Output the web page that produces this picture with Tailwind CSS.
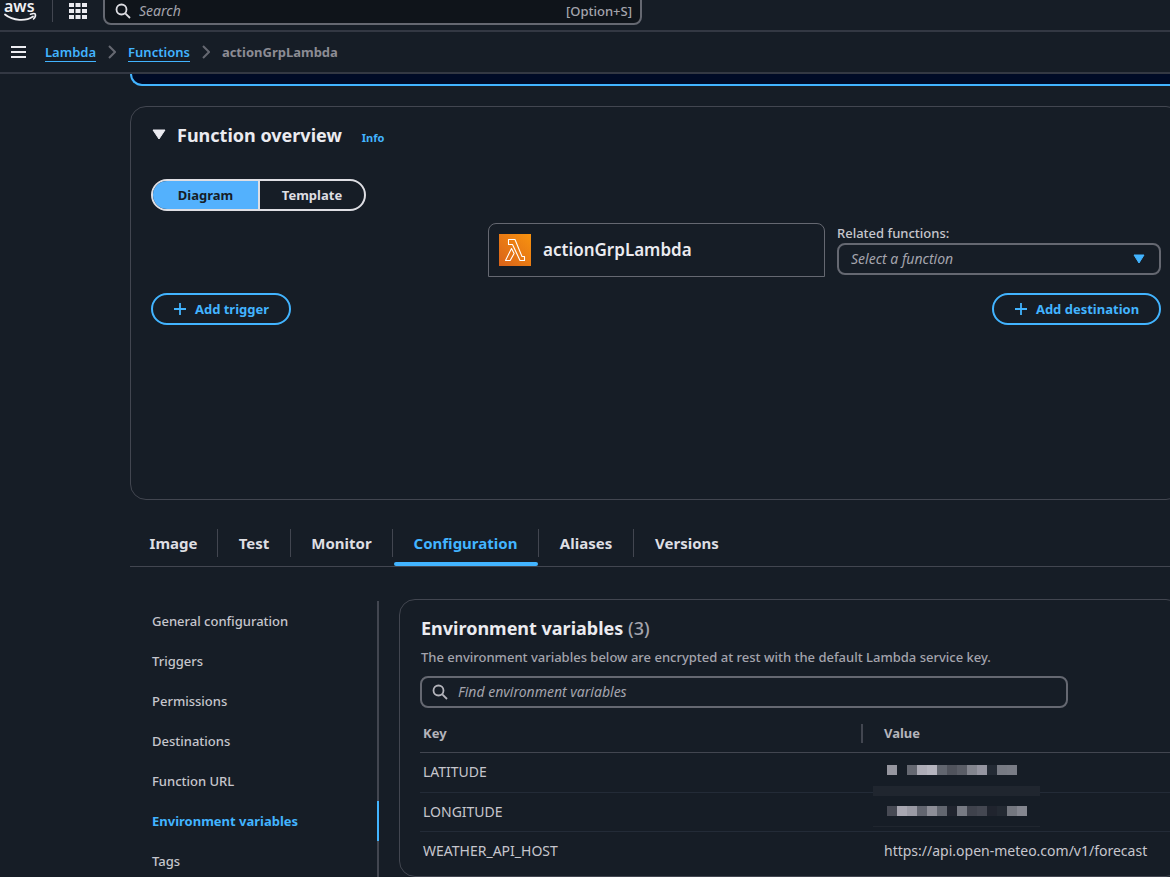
<!DOCTYPE html>
<html lang="en">
<head>
    <meta charset="UTF-8">
    <meta name="viewport" content="width=device-width, initial-scale=1.0">
    <title>actionGrpLambda | Functions | Lambda</title>
    <script src="https://cdn.jsdelivr.net/npm/@tailwindcss/browser@4"></script>
</head>
<body class="bg-[#161d26] text-[#c6c6cd] font-['Noto_Sans','Open_Sans',sans-serif] text-[13px] leading-5 min-h-screen overflow-x-hidden">
    <!-- Top navigation -->
    <header class="h-8 flex items-end border-b-2 border-[#333843] overflow-hidden">
        <div class="flex items-end h-full w-full">
            <a href="#" aria-label="AWS" class="ml-1 mb-2 shrink-0">
                <svg width="34" height="22" viewBox="0 0 34 22" fill="none">
                    <text x="0" y="12" font-size="16" font-weight="600" fill="#f0f0f3" font-family="Noto Sans, sans-serif">aws</text>
                    <path d="M1 14.5C9 21 22 21.500 29 16.500" stroke="#f0f0f3" stroke-width="1.800" stroke-linecap="round"/>
                    <path d="M26.500 14.200C29 13.400 31 13.600 31.300 14.200C31.600 15 31 17.500 29.500 19" stroke="#f0f0f3" stroke-width="1.600" stroke-linecap="round"/>
                </svg>
            </a>
            <div class="ml-3.5 mb-2 h-8 w-px bg-[#424650]"></div>
            <button aria-label="Services" class="ml-4 mb-2.5">
                <svg width="18" height="18" viewBox="0 0 18 18" fill="#ebebf0">
                    <path d="M0 1h5v4H0zM6.500 1h5v4h-5zM13 1h5v4h-5zM0 7h5v4H0zM6.500 7h5v4h-5zM13 7h5v4h-5zM0 13h5v4H0zM6.500 13h5v4h-5zM13 13h5v4h-5z"/>
                </svg>
            </button>
            <label class="ml-4 mb-[5px] w-[539px] h-9 flex items-center gap-2 shrink-0 rounded-lg border-2 border-[#656871] bg-[#0f141a] pl-2.5 pr-2 pt-2 text-sm">
                <svg width="16" height="16" viewBox="0 0 16 16" fill="none" stroke="#dedee3" stroke-width="1.800">
                    <circle cx="6.500" cy="6.500" r="5"/>
                    <path d="M10.300 10.300L15 15"/>
                </svg>
                <input type="text" placeholder="Search" aria-label="Search" class="grow min-w-0 bg-transparent outline-none placeholder:italic placeholder:text-[#a4a4ad]">
                <span class="text-[13px] text-[#a4a4ad] font-medium">[Option+S]</span>
            </label>
        </div>
    </header>

    <!-- Breadcrumbs -->
    <nav class="h-[42px] flex items-center border-b-2 border-[#333843] pl-[11px] text-[#8c8c94]" aria-label="Breadcrumbs">
        <button aria-label="Open navigation" class="mr-[19px]">
            <svg width="15" height="14" viewBox="0 0 15 14" stroke="#ebebf0" stroke-width="2">
                <path d="M0 2h15M0 7h15M0 12h15"/>
            </svg>
        </button>
        <a href="#" class="text-[#42b4ff] border-b leading-[18px] font-semibold">Lambda</a>
        <svg class="mx-3" width="8" height="14" viewBox="0 0 8 14" fill="none" stroke="#656871" stroke-width="2"><path d="M1 1l6 6-6 6"/></svg>
        <a href="#" class="text-[#42b4ff] border-b leading-[18px] font-semibold">Functions</a>
        <svg class="mx-3" width="8" height="14" viewBox="0 0 8 14" fill="none" stroke="#656871" stroke-width="2"><path d="M1 1l6 6-6 6"/></svg>
        <span class="font-bold">actionGrpLambda</span>
    </nav>

    <main class="ml-[130px] -mr-3">
        <!-- Notification, scrolled under the header -->
        <div class="h-3 rounded-bl-xl border-l-2 border-b-2 border-[#42b4ff] bg-[#000b26]"></div>

        <section class="mt-5 h-[394px] rounded-2xl border border-[#424650] px-5 pt-[17px]">
            <div class="flex items-center">
                <svg class="ml-px" width="14" height="12" viewBox="0 0 14 12" fill="#ebebf0" stroke="#ebebf0" stroke-linejoin="round"><path d="M1 1h12L7 10z"/></svg>
                <h2 class="ml-[11px] text-lg leading-[22px] font-bold text-[#ebebf0]">Function overview</h2>
                <a href="#" class="ml-5 pt-1.5 text-[11px] leading-4 font-bold text-[#42b4ff]">Info</a>
            </div>

            <div class="mt-[33px] inline-flex h-8 rounded-full border-2 border-[#dedee3] overflow-hidden font-bold">
                <button class="w-[105px] bg-[#53b1fd] text-[#161d26]">Diagram</button>
                <button class="w-[106px] border-l-2 border-[#dedee3] text-[#dedee3]">Template</button>
            </div>

            <div class="mt-3 grid grid-cols-[1fr_337px_324px] gap-x-3">
                <div class="pt-[70px]">
                    <button class="h-8 w-[140px] flex items-center justify-center gap-2 rounded-full border-2 border-[#42b4ff] text-[#42b4ff] font-bold">
                        <svg width="14" height="14" viewBox="0 0 14 14" stroke="currentColor" stroke-width="1.800"><path d="M7 1v12M1 7h12"/></svg>
                        Add trigger
                    </button>
                </div>
                <div class="h-[54px] flex items-center gap-3 rounded-t-lg border border-[#656871] pl-2.5">
                    <svg width="32" height="32" viewBox="0 0 32 32" fill="none">
                        <defs><linearGradient id="orange" x1="0" y1="1" x2="1" y2="0"><stop stop-color="#d9621a"/><stop offset="1" stop-color="#f8930f"/></linearGradient></defs>
                        <path fill="url(#orange)" d="M0 0h32v32H0z"/>
                        <path stroke="#fff" stroke-width="1.100" stroke-linejoin="round" d="M9.500 5.500h6.500L23 22.500h2.500v4h-4.500L13.500 10.500h-4zM12.500 14.500L6.500 26.500h4.700l3.900-7z"/>
                    </svg>
                    <span class="text-[17px] font-semibold text-[#ebebf0]">actionGrpLambda</span>
                </div>
                <div class="flex flex-col">
                    <label for="related" class="font-medium">Related functions:</label>
                    <div class="relative">
                        <select id="related" class="appearance-none block w-full h-8 rounded-lg border-2 border-[#656871] pl-3 text-sm italic text-[#a4a4ad]">
                            <option>Select a function</option>
                        </select>
                        <svg class="absolute right-4 top-[11px] pointer-events-none" width="12" height="10" viewBox="0 0 12 10" fill="#42b4ff" stroke="#42b4ff" stroke-linejoin="round"><path d="M1 1h10L6 9z"/></svg>
                    </div>
                    <button class="mt-[18px] self-end h-8 w-[169px] flex items-center justify-center gap-2 rounded-full border-2 border-[#42b4ff] text-[#42b4ff] font-bold">
                        <svg width="14" height="14" viewBox="0 0 14 14" stroke="currentColor" stroke-width="1.800"><path d="M7 1v12M1 7h12"/></svg>
                        Add destination
                    </button>
                </div>
            </div>
        </section>

        <!-- Tabs -->
        <div class="mt-[18px] flex items-center border-b border-[#424650] text-[15px] font-bold text-[#dedee3]">
            <button class="h-12 w-[88px] pt-0.5 flex items-center"><span class="grow border-r border-[#424650] leading-7">Image</span></button>
            <button class="h-12 w-[73px] pt-0.5 flex items-center"><span class="grow border-r border-[#424650] leading-7">Test</span></button>
            <button class="h-12 w-[102px] pt-0.5 flex items-center"><span class="grow border-r border-[#424650] leading-7">Monitor</span></button>
            <button class="relative h-12 w-[146px] pt-0.5 flex items-center text-[#42b4ff]">
                <span class="grow border-r border-[#424650] leading-7">Configuration</span>
                <span class="absolute left-px right-px bottom-0 h-1 rounded-l-sm rounded-r-sm bg-[#42b4ff]"></span>
            </button>
            <button class="h-12 w-[95px] pt-0.5 flex items-center"><span class="grow border-r border-[#424650] leading-7">Aliases</span></button>
            <button class="h-12 w-[106px] pt-0.5 flex items-center"><span class="grow leading-7">Versions</span></button>
        </div>

        <div class="mt-8 flex">
            <nav class="mt-0.5 w-[249px] shrink-0 flex flex-col font-medium" aria-label="Configuration">
                <a href="#" class="h-10 pl-[22px] flex items-center border-r-2 border-[#424650]">General configuration</a>
                <a href="#" class="h-10 pl-[22px] flex items-center border-r-2 border-[#424650]">Triggers</a>
                <a href="#" class="h-10 pl-[22px] flex items-center border-r-2 border-[#424650]">Permissions</a>
                <a href="#" class="h-10 pl-[22px] flex items-center border-r-2 border-[#424650]">Destinations</a>
                <a href="#" class="h-10 pl-[22px] flex items-center border-r-2 border-[#424650]">Function URL</a>
                <a href="#" class="h-10 pl-[22px] flex items-center border-r-2 border-[#42b4ff] font-bold text-[#42b4ff]">Environment variables</a>
                <a href="#" class="h-9 pt-1 pl-[22px] flex items-center border-r-2 border-[#424650]">Tags</a>
            </nav>

            <section class="ml-5 grow rounded-2xl border border-[#424650] pl-5 pt-[17px] pb-0.5">
                <h2 class="pl-px text-lg leading-[22px] font-bold text-[#ebebf0]">Environment variables <span class="font-medium text-[#a4a4ad]">(3)</span></h2>
                <p class="mt-2 pl-px font-medium text-[#a4a4ad]">The environment variables below are encrypted at rest with the default Lambda service key.</p>
                <label class="mt-[9px] w-[648px] h-8 flex items-center gap-2.5 rounded-lg border-2 border-[#656871] px-2.5 text-sm">
                    <svg width="16" height="16" viewBox="0 0 16 16" fill="none" stroke="#b4b4bb" stroke-width="1.800">
                        <circle cx="6.500" cy="6.500" r="5"/>
                        <path d="M10.300 10.300L15 15"/>
                    </svg>
                    <input type="text" placeholder="Find environment variables" aria-label="Find environment variables" class="grow bg-transparent outline-none placeholder:italic placeholder:text-[#a4a4ad]">
                </label>
                <table class="mt-2 w-full table-fixed text-left text-sm">
                    <thead>
                        <tr class="h-9 border-b border-[#424650] text-[13px] text-[#b4b4bb]">
                            <th class="w-[443px] pl-[3px] font-bold"><div class="border-r-2 border-[#424650]">Key</div></th>
                            <th class="pl-[21px] font-bold">Value</th>
                        </tr>
                    </thead>
                    <tbody>
                        <tr class="h-10 border-b border-[#232b37]">
                            <td class="pl-[3px]">LATITUDE</td>
                            <td class="relative pl-6">
                                <div class="flex h-2.5 mb-1" aria-label="hidden value">
                                    <i class="w-2.5 bg-[#96969f]"></i><i class="w-2.5"></i><i class="w-2.5 bg-[#656871]"></i><i class="w-2.5 bg-[#adacb6]"></i><i class="w-2.5 bg-[#b5b4be]"></i><i class="w-2.5 bg-[#62666f]"></i><i class="w-2.5 bg-[#50535c]"></i><i class="w-2.5 bg-[#5a5d66]"></i><i class="w-2.5 bg-[#83858e]"></i><i class="w-2.5 bg-[#9595a0]"></i><i class="w-2.5 bg-[#232a34]"></i><i class="w-2.5 bg-[#777a83]"></i><i class="w-2.5 bg-[#797c85]"></i>
                                </div>
                                <div class="absolute left-2.5 -bottom-1 w-[167px] h-2.5 bg-[#20262f]"></div>
                            </td>
                        </tr>
                        <tr class="h-[39px] border-b border-[#232b37]">
                            <td class="pl-[3px]">LONGITUDE</td>
                            <td class="relative pl-6">
                                <div class="flex h-2.5 mb-0.5" aria-label="hidden value">
                                    <i class="w-2.5 bg-[#474a54]"></i><i class="w-2.5 bg-[#a8a7b1]"></i><i class="w-2.5 bg-[#9a9aa4]"></i><i class="w-2.5 bg-[#62656f]"></i><i class="w-2.5 bg-[#8d8e97]"></i><i class="w-2.5 bg-[#62666f]"></i><i class="w-2.5 bg-[#20242e]"></i><i class="w-2.5 bg-[#777a83]"></i><i class="w-2.5 bg-[#3f424c]"></i><i class="w-2.5 bg-[#444751]"></i><i class="w-2.5 bg-[#20242e]"></i><i class="w-2.5 bg-[#232932]"></i><i class="w-2.5 bg-[#74777f]"></i><i class="w-2.5 bg-[#84868f]"></i>
                                </div>
                                <div class="absolute left-2.5 bottom-1 w-[167px] h-px bg-[#20262f]"></div>
                            </td>
                        </tr>
                        <tr class="h-[39px]">
                            <td class="pl-[3px]">WEATHER_API_HOST</td>
                            <td class="pl-[21px]">https://api.open-meteo.com/v1/forecast</td>
                        </tr>
                    </tbody>
                </table>
            </section>
        </div>
    </main>
</body>
</html>
